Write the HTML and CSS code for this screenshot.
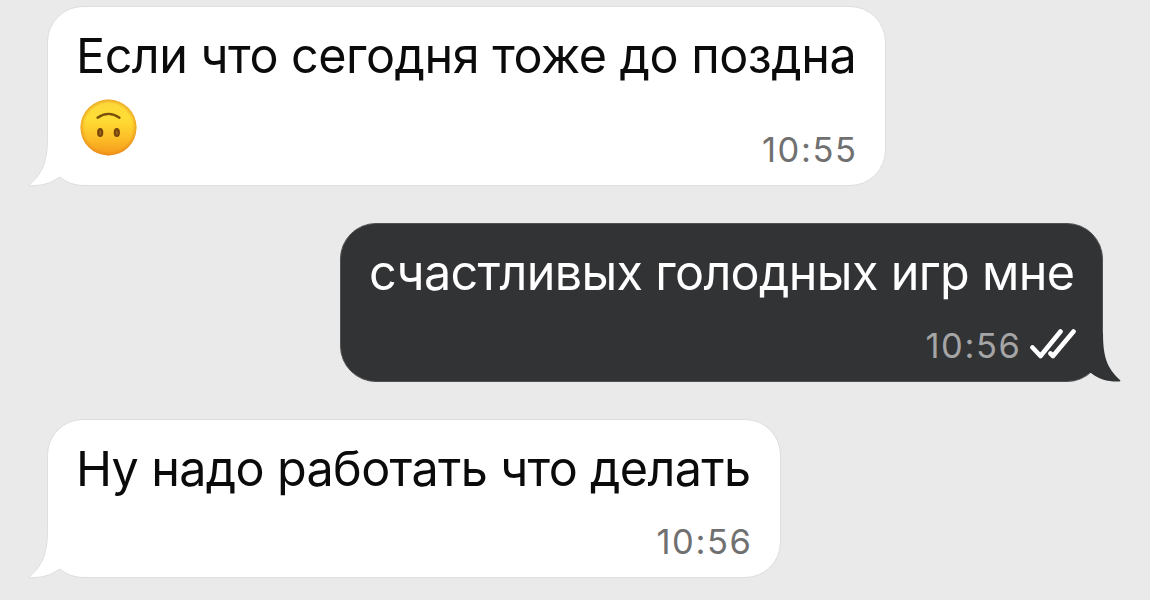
FILE: index.html
```html
<!DOCTYPE html>
<html lang="ru">
<head>
  <meta charset="utf-8">
  <title>Чат</title>
  <link rel="stylesheet" href="styles.css">
</head>
<body>
  <div class="chat">

    <div class="message incoming first">
      <svg class="tail" width="60" height="50" viewBox="0 0 60 50">
        <path class="tail-fill" d="M20.5 0 C20.5 24 16 36 3 47 C2 48.3 3 48.6 6 48.5 C16 48.5 25 46 32 40 L48 36 L40 0 Z"/>
        <path class="tail-line" d="M20.5 0 C20.5 24 16 36 3 47 C2 48.3 3 48.6 6 48.5 C16 48.5 25 46 32 40"/>
      </svg>
      <p class="text">Если что сегодня тоже до поздна</p>
      <div class="bottom">
        <svg class="emoji" width="57" height="57" viewBox="0 0 57 57">
          <defs>
            <linearGradient id="face" x1="0" y1="0" x2="0" y2="1">
              <stop offset="0" stop-color="#fbd83b"/>
              <stop offset="0.35" stop-color="#ffdd35"/>
              <stop offset="0.7" stop-color="#fcbd27"/>
              <stop offset="1" stop-color="#f6971b"/>
            </linearGradient>
            <radialGradient id="edge">
              <stop offset="0.85" stop-color="#e78c15" stop-opacity="0"/>
              <stop offset="1" stop-color="#e0841c" stop-opacity="0.6"/>
            </radialGradient>
          </defs>
          <circle cx="28.5" cy="28.5" r="28" fill="url(#face)"/>
          <circle cx="28.5" cy="28.5" r="28" fill="url(#edge)"/>
          <path d="M17.5 18.7 Q28.5 11 39.5 18.7" fill="none" stroke="#79500b" stroke-width="2.3" stroke-linecap="round"/>
          <ellipse cx="20.2" cy="33.5" rx="3.1" ry="4.5" fill="#76460a"/>
          <ellipse cx="36.8" cy="33.5" rx="3.1" ry="4.5" fill="#76460a"/>
          <ellipse cx="20.2" cy="33.8" rx="1.1" ry="2.3" fill="#986321"/>
          <ellipse cx="36.8" cy="33.8" rx="1.1" ry="2.3" fill="#986321"/>
        </svg>
        <span class="time">10:55</span>
      </div>
    </div>

    <div class="message outgoing">
      <svg class="tail" width="60" height="50" viewBox="0 0 60 50">
        <path class="tail-fill" d="M40 0 C40 24 44 35 57 47 C58 48.3 57 48.6 54 48.5 C44 48.5 35 46 28 40 L12 36 L20 0 Z"/>
      </svg>
      <p class="text">счастливых голодных игр мне</p>
      <div class="bottom">
        <span class="time">10:56</span>
        <svg class="checks" width="46" height="32" viewBox="0 0 46 32">
          <path d="M2.5 18.5 L10.5 27 L30.5 2.5"/>
          <path d="M20.5 24.5 L23 27 L43.5 2.5"/>
        </svg>
      </div>
    </div>

    <div class="message incoming last">
      <svg class="tail" width="60" height="50" viewBox="0 0 60 50">
        <path class="tail-fill" d="M20.5 0 C20.5 24 16 36 3 47 C2 48.3 3 48.6 6 48.5 C16 48.5 25 46 32 40 L48 36 L40 0 Z"/>
        <path class="tail-line" d="M20.5 0 C20.5 24 16 36 3 47 C2 48.3 3 48.6 6 48.5 C16 48.5 25 46 32 40"/>
      </svg>
      <p class="text">Ну надо работать что делать</p>
      <div class="bottom">
        <span class="time">10:56</span>
      </div>
    </div>

  </div>
</body>
</html>
```
FILE: styles.css
```css
* {
  box-sizing: border-box;
}

body {
  margin: 0;
  background-color: #eaeaea;
  font-family: Inter, "Liberation Sans", sans-serif;
}

.chat {
  display: flex;
  flex-direction: column;
  align-items: flex-start;
  gap: 37px;
  height: 600px;
  padding: 6px 47px 0 47px;
  overflow: hidden;
}

.message {
  position: relative;
  display: flex;
  flex-direction: column;
  justify-content: space-between;
  height: 159px;
  padding: 20px 29px 16px 28px;
  border: 1px solid #dedede;
  border-radius: 36px;
}

.incoming {
  background-color: white;
  color: #0b0b0b;
}

.outgoing {
  align-self: flex-end;
  width: 763px;
  background-color: #323335;
  border-color: #505153;
  color: white;
}

.first {
  width: 839px;
  height: 180px;
}

.last {
  width: 734px;
}

.text {
  margin: 0;
  font-size: 48.5px;
  line-height: 58px;
  letter-spacing: -0.66px;
  white-space: nowrap;
}

.first .text {
  letter-spacing: -0.5px;
}

.bottom {
  display: flex;
  justify-content: flex-end;
  align-items: flex-end;
}

.time {
  margin-right: -1.6px;
  color: #707070;
  font-size: 34.5px;
  line-height: 38px;
  letter-spacing: 1.6px;
}

.outgoing .time {
  color: #a5a5a6;
}

.emoji {
  margin-left: 4px;
  margin-right: auto;
  margin-bottom: 13px;
}

.checks {
  margin-left: 10px;
  margin-right: -3px;
  margin-bottom: 4px;
}

.checks path {
  fill: none;
  stroke: white;
  stroke-width: 4.6;
  stroke-linecap: round;
  stroke-linejoin: round;
}

.tail {
  position: absolute;
  bottom: -2px;
}

.incoming .tail {
  left: -21px;
}

.outgoing .tail {
  right: -21px;
}

.tail-fill {
  fill: white;
}

.outgoing .tail-fill {
  fill: #323335;
}

.tail-line {
  fill: none;
  stroke: #dedede;
  stroke-width: 1;
}
```
